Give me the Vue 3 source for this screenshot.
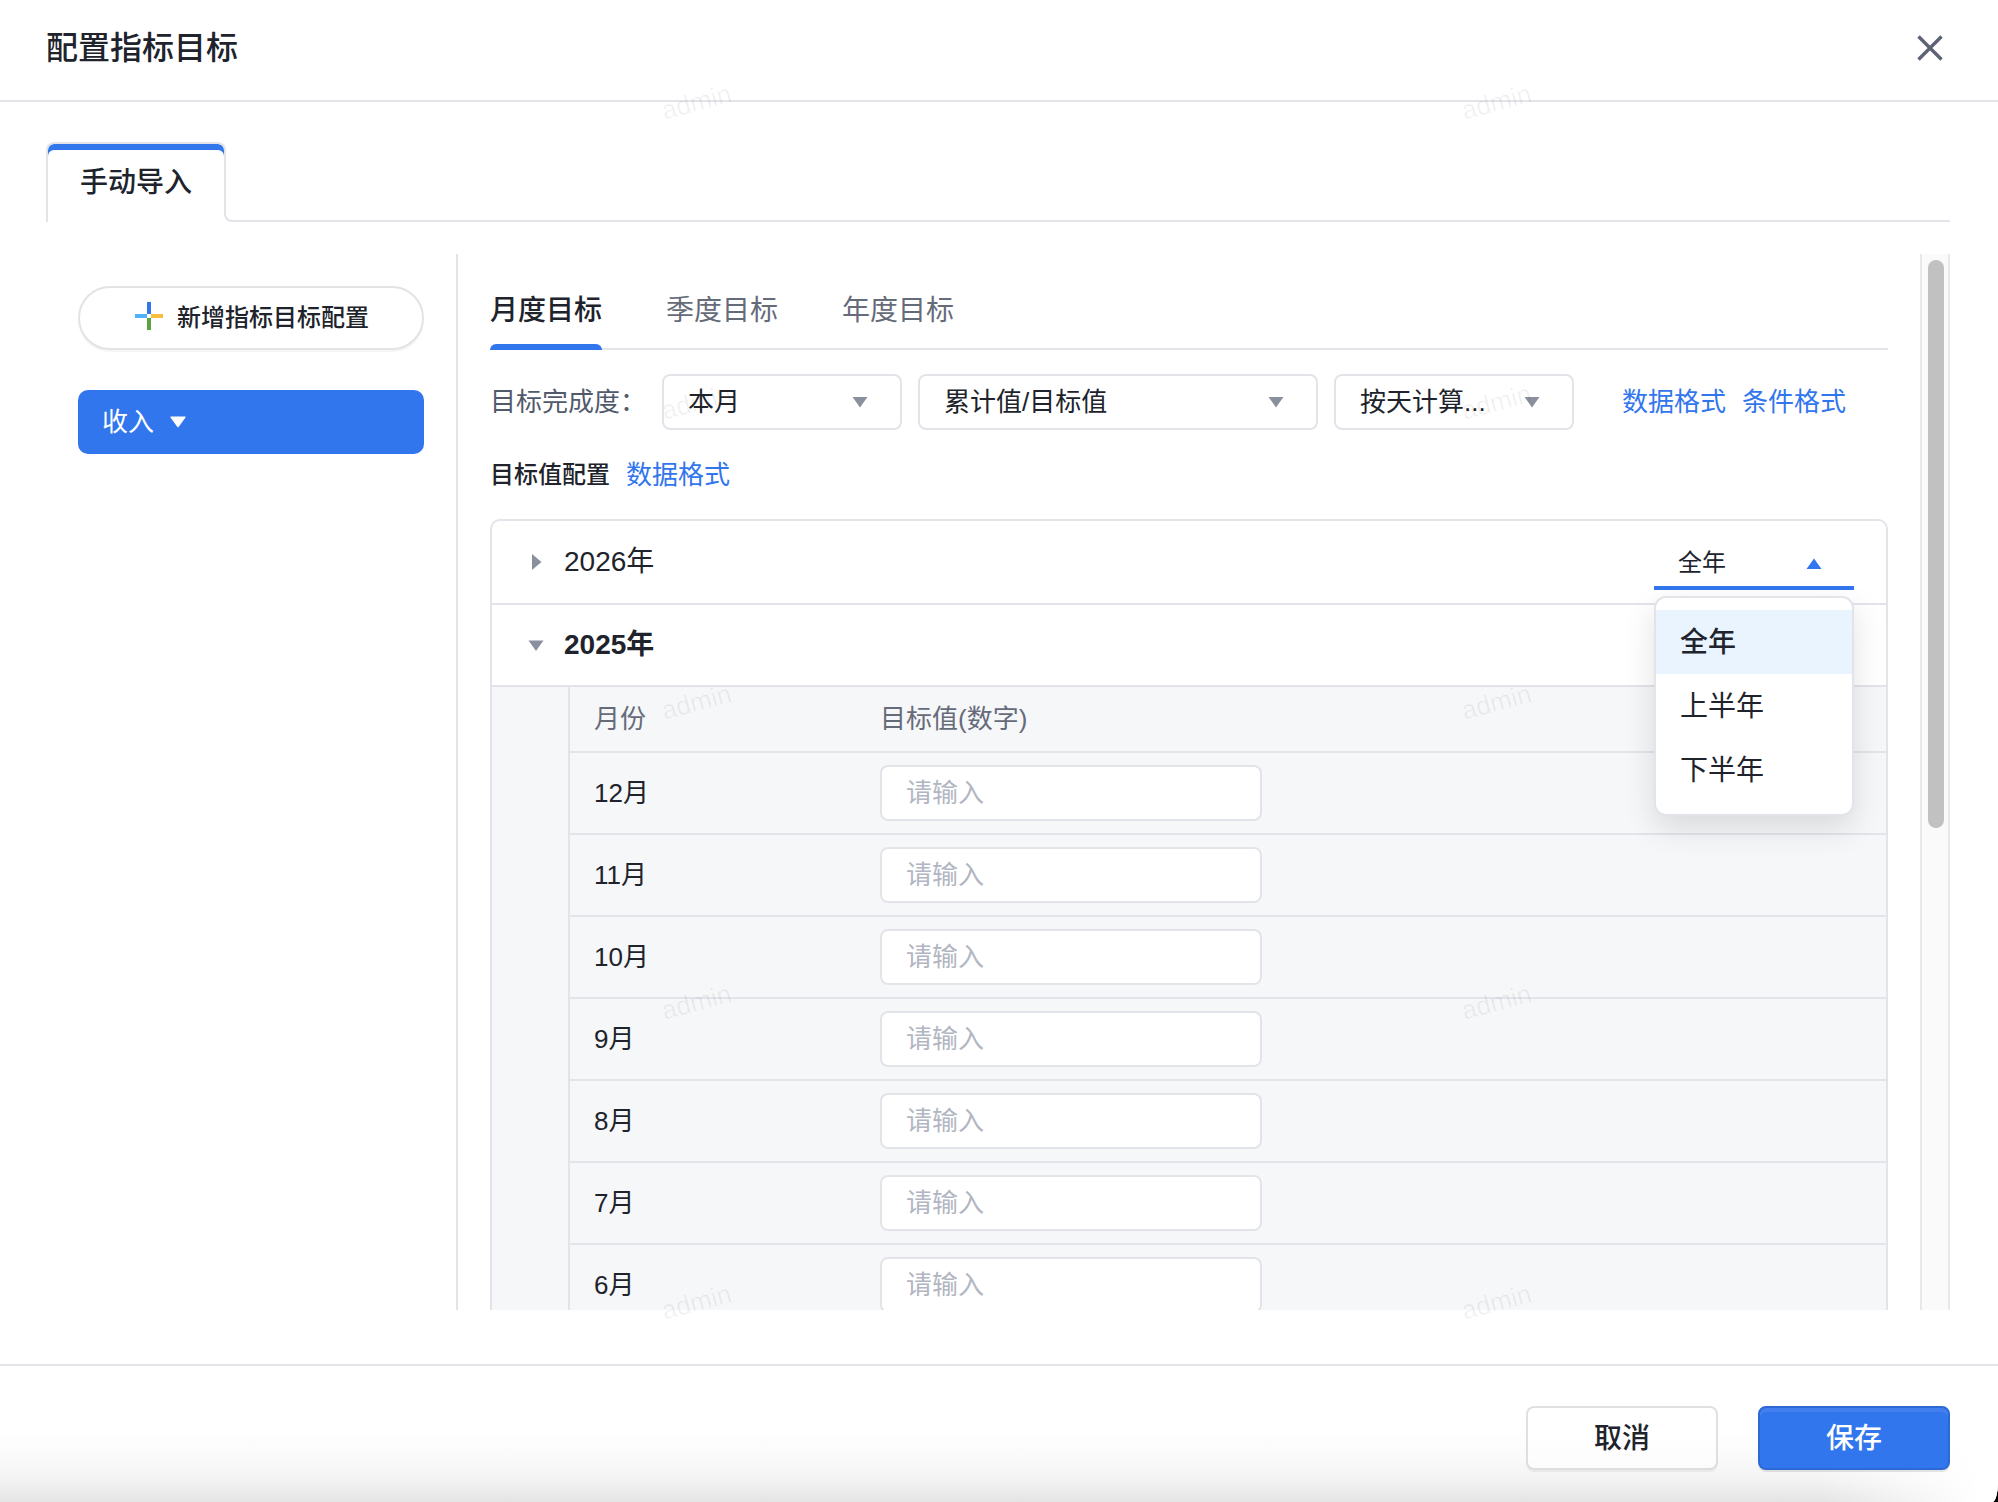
<script setup>
import { ref } from 'vue'

const goalTabs = ['月度目标', '季度目标', '年度目标']
const activeGoal = ref('月度目标')
const period = ref('本月')
const formula = ref('累计值/目标值')
const calc = ref('按天计算...')
const range = ref('全年')
const ranges = ['全年', '上半年', '下半年']
const menuOpen = ref(true)
const months = [12, 11, 10, 9, 8, 7, 6]
const values = ref({})

function pick(item) {
  range.value = item
  menuOpen.value = false
}
</script>

<template>
  <div class="window">
    <section class="dialog" role="dialog" aria-labelledby="dialog-title">
      <header class="header">
        <h1 id="dialog-title">配置指标目标</h1>
        <button class="close" type="button" aria-label="关闭">
          <svg viewBox="0 0 28 28" width="28" height="28">
            <path d="M2.5 2.5 25.5 25.5M25.5 2.5 2.5 25.5" fill="none" stroke="#5c6375" stroke-width="3.400" />
          </svg>
        </button>
      </header>

      <div class="body">
        <nav class="strip">
          <button class="strip-tab" type="button">手动导入</button>
          <span class="strip-line"></span>
        </nav>

        <div class="columns">
          <aside class="sidebar">
            <button class="add" type="button">
              <svg viewBox="0 0 28 32" width="28" height="32" aria-hidden="true">
                <path d="M12 0h4v12h-4z" fill="#3176ed" />
                <path d="M0 12h12v4H0z" fill="#4fb0fb" />
                <path d="M16 12h12v4H16z" fill="#f9bf3c" />
                <path d="M12 16h4v12h-4z" fill="#5ea142" />
              </svg>
              <span>新增指标目标配置</span>
            </button>
            <button class="metric" type="button">
              <span>收入</span>
              <svg viewBox="0 0 16 12" width="16" height="12" aria-hidden="true">
                <path d="M1 .5h14a.6.6 0 0 1 .5 1L8.600 11a.8.8 0 0 1-1.200 0L.5 1.500A.6.6 0 0 1 1 .5z" fill="#fff" />
              </svg>
            </button>
          </aside>

          <main class="pane">
            <div class="goal-tabs" role="tablist">
              <button
                v-for="tab in goalTabs"
                :key="tab"
                type="button"
                role="tab"
                class="goal-tab"
                :class="{ active: tab === activeGoal }"
                :aria-selected="tab === activeGoal"
                @click="activeGoal = tab"
              >{{ tab }}</button>
            </div>

            <div class="filters">
              <label class="filter-label" for="period">目标完成度：</label>
              <div class="select">
                <select id="period" v-model="period"><option>本月</option></select>
                <svg viewBox="0 0 16 12" width="16" height="12"><path d="M.5 1h15L8 11.500z" /></svg>
              </div>
              <div class="select wide">
                <select v-model="formula" aria-label="计算公式"><option>累计值/目标值</option></select>
                <svg viewBox="0 0 16 12" width="16" height="12"><path d="M.5 1h15L8 11.500z" /></svg>
              </div>
              <div class="select">
                <select v-model="calc" aria-label="计算方式"><option>按天计算...</option></select>
                <svg viewBox="0 0 16 12" width="16" height="12"><path d="M.5 1h15L8 11.500z" /></svg>
              </div>
              <div class="links">
                <a href="#">数据格式</a>
                <a href="#">条件格式</a>
              </div>
            </div>

            <div class="subtitle">
              <h2>目标值配置</h2>
              <a href="#">数据格式</a>
            </div>

            <div class="years">
              <div class="year">
                <button class="year-toggle" type="button" aria-expanded="false">
                  <svg viewBox="0 0 18 18" width="18" height="18"><path d="M4 1v16l9.500-8z" /></svg>
                  <span>2026年</span>
                </button>
                <div class="range">
                  <select v-model="range" aria-label="时间范围" @mousedown.prevent="menuOpen = !menuOpen">
                    <option v-for="item in ranges" :key="item">{{ item }}</option>
                  </select>
                  <svg viewBox="0 0 16 12" width="16" height="12"><path d="M.5 11h15L8 .5z" /></svg>
                  <ul v-if="menuOpen" class="menu" role="listbox">
                    <li
                      v-for="item in ranges"
                      :key="item"
                      role="option"
                      :class="{ chosen: item === range }"
                      :aria-selected="item === range"
                      @click="pick(item)"
                    >{{ item }}</li>
                  </ul>
                </div>
              </div>
              <div class="year open">
                <button class="year-toggle" type="button" aria-expanded="true">
                  <svg viewBox="0 0 18 18" width="18" height="18"><path d="M.5 4.500h15L8 15z" /></svg>
                  <span>2025年</span>
                </button>
              </div>
              <div class="detail">
                <table>
                  <thead>
                    <tr><th class="month">月份</th><th>目标值(数字)</th></tr>
                  </thead>
                  <tbody>
                    <tr v-for="m in months" :key="m">
                      <td><label :for="'m' + m">{{ m }}月</label></td>
                      <td><input :id="'m' + m" v-model="values[m]" type="text" placeholder="请输入" /></td>
                    </tr>
                  </tbody>
                </table>
              </div>
            </div>
          </main>

          <div class="track"><div class="thumb"></div></div>
        </div>
      </div>

      <footer class="footer">
        <button class="btn" type="button">取消</button>
        <button class="btn primary" type="button">保存</button>
      </footer>

      <div class="watermark" aria-hidden="true">
        <span v-for="n in 10" :key="n">admin</span>
      </div>
    </section>
  </div>
</template>

<style>
body {
  margin: 0;
}
</style>

<style scoped>
* {
  box-sizing: border-box;
}

.window {
  --line: #e3e4ea;
  --ink: #20232b;
  --blue: #3176ed;
  --grey: #8b909f;
  background: #000;
  font-family: "Liberation Sans", "Noto Sans CJK SC", sans-serif;
  font-size: 26px;
  line-height: 40px;
  color: var(--ink);
}

.dialog {
  position: relative;
  display: flex;
  flex-direction: column;
  height: 100vh;
  overflow: hidden;
  background: #fff;
  border-bottom-right-radius: 6px 20px;
}

button,
input,
select {
  margin: 0;
  padding: 0;
  border: 0;
  background: none;
  font: inherit;
  color: inherit;
  appearance: none;
  outline: none;
}

a {
  color: var(--blue);
  text-decoration: none;
}

.header {
  display: flex;
  flex: none;
  align-items: center;
  justify-content: space-between;
  height: 102px;
  padding: 0 54px 4px 46px;
  border-bottom: 2px solid var(--line);
}

h1 {
  margin: 0;
  font-size: 32px;
  font-weight: 500;
}

.close {
  display: flex;
}

.body {
  display: flex;
  flex: 1;
  flex-direction: column;
  min-height: 0;
  padding: 40px 48px 54px 46px;
}

.strip {
  display: flex;
  flex: none;
  align-items: flex-end;
}

.strip-tab {
  position: relative;
  height: 80px;
  padding: 2px 34px 0;
  font-size: 28px;
  font-weight: 500;
}

.strip-tab::before {
  content: "";
  position: absolute;
  inset: 0 0 12px 0;
  border: 2px solid var(--line);
  border-bottom: 0;
  border-radius: 8px 8px 0 0;
  box-shadow: inset 0 6px 0 var(--blue);
}

.strip-tab::after {
  content: "";
  position: absolute;
  left: 0;
  bottom: 0;
  width: 2px;
  height: 12px;
  background: var(--line);
}

.strip-line {
  flex: 1;
  height: 12px;
  margin-left: -2px;
  border: solid var(--line);
  border-width: 0 0 2px 2px;
  border-bottom-left-radius: 8px;
}

.columns {
  display: flex;
  flex: 1;
  min-height: 0;
  margin-top: 32px;
}

.sidebar {
  display: flex;
  flex: none;
  flex-direction: column;
  gap: 40px;
  width: 412px;
  padding: 32px;
  border-right: 2px solid var(--line);
}

.add {
  display: flex;
  align-items: center;
  justify-content: center;
  gap: 14px;
  height: 64px;
  padding-left: 2px;
  border: 2px solid #e3e3e3;
  border-radius: 32px;
  box-shadow: 0 2px 0 #f5f5f5;
  font-size: 24px;
  font-weight: 500;
}

.metric {
  display: flex;
  align-items: center;
  gap: 16px;
  height: 64px;
  padding: 0 24px;
  border-radius: 10px;
  background: var(--blue);
  color: #fff;
}

.pane {
  flex: 1;
  min-width: 0;
  padding: 32px 32px 0;
  overflow: hidden;
}

.goal-tabs {
  display: flex;
  gap: 64px;
  border-bottom: 2px solid var(--line);
}

.goal-tab {
  height: 64px;
  margin-bottom: -2px;
  padding-bottom: 14px;
  font-size: 28px;
  color: #666b7a;
  position: relative;
}

.goal-tab.active {
  font-weight: 500;
  color: var(--ink);
}

.goal-tab.active::after {
  content: "";
  position: absolute;
  inset: auto 0 0 0;
  height: 6px;
  border-radius: 6px 6px 0 0;
  background: var(--blue);
}

.filters {
  display: flex;
  align-items: center;
  gap: 16px;
  margin-top: 24px;
}

.filter-label {
  width: 156px;
  color: #505a6b;
}

.select {
  position: relative;
  width: 240px;
}

.select.wide {
  width: 400px;
}

.select select {
  display: block;
  width: 100%;
  height: 56px;
  padding: 0 24px;
  border: 2px solid var(--line);
  border-radius: 8px;
  background: #fff;
}

.select svg {
  position: absolute;
  top: 22px;
  right: 34px;
  fill: var(--grey);
  pointer-events: none;
}

.links {
  display: flex;
  gap: 16px;
  margin-left: 32px;
}

.subtitle {
  display: flex;
  align-items: center;
  gap: 16px;
  margin-top: 25px;
}

h2 {
  margin: 0;
  font-size: 24px;
  font-weight: 500;
}

.years {
  margin-top: 24px;
  border: 2px solid var(--line);
  border-radius: 10px;
}

.year {
  display: flex;
  align-items: center;
  justify-content: space-between;
  height: 84px;
  padding: 0 32px 0 36px;
  border-bottom: 2px solid var(--line);
  font-size: 28px;
}

.year.open {
  height: 82px;
  font-weight: 600;
}

.year-toggle {
  display: flex;
  align-items: center;
  gap: 18px;
}

.year-toggle svg {
  fill: var(--grey);
}

.range {
  position: relative;
  width: 200px;
  align-self: flex-end;
  margin-bottom: 13px;
}

.range select {
  display: block;
  width: 100%;
  height: 52px;
  padding: 2px 24px 0;
  border-bottom: 4px solid var(--blue);
  font-size: 24px;
}

.range svg {
  position: absolute;
  top: 20px;
  right: 32px;
  fill: var(--blue);
  pointer-events: none;
}

.menu {
  position: absolute;
  z-index: 2;
  top: 58px;
  left: 0;
  right: 0;
  margin: 0;
  padding: 12px 0;
  list-style: none;
  border: 2px solid var(--line);
  border-radius: 12px;
  background: #fff;
  box-shadow: 0 12px 32px rgba(0, 0, 0, 0.12);
}

.menu li {
  height: 64px;
  padding: 0 24px;
  line-height: 66px;
}

.menu li.chosen {
  background: #e9f4fe;
  font-weight: 500;
}

.detail {
  padding-left: 76px;
  background: #f6f7f9;
}

table {
  width: 100%;
  border-spacing: 0;
  border-left: 2px solid var(--line);
}

th,
td {
  height: 82px;
  padding: 0 24px;
  border-bottom: 2px solid var(--line);
  text-align: left;
}

th {
  height: 66px;
  font-weight: 400;
  color: #666b7a;
}

.month {
  width: 286px;
}

td input {
  display: block;
  width: 382px;
  height: 56px;
  padding: 0 24px;
  border: 2px solid var(--line);
  border-radius: 8px;
  background: #fff;
}

td input::placeholder {
  color: #b2b6c2;
  opacity: 1;
}

.track {
  flex: none;
  width: 30px;
  padding: 6px;
  border: solid #e8e8e8;
  border-width: 0 2px;
  background: #fafafa;
}

.thumb {
  width: 16px;
  height: calc(54% + 4px);
  border-radius: 8px;
  background: #c1c1c1;
}

.footer {
  display: flex;
  flex: none;
  justify-content: flex-end;
  gap: 40px;
  height: 138px;
  padding: 40px 48px 0;
  border-top: 2px solid var(--line);
  background:
    linear-gradient(to right, transparent calc(100% - 180px), #fff calc(100% - 20px)),
    linear-gradient(#fff 45%, #fbfbfb 65%, #f3f3f3 84%, #e4e4e4);
}

.btn {
  width: 192px;
  height: 64px;
  padding-top: 2px;
  border: 2px solid rgba(0, 0, 0, 0.12);
  border-radius: 8px;
  background: rgba(255, 255, 255, 0.6);
  box-shadow: 0 2px 0 rgba(0, 0, 0, 0.05);
  font-size: 28px;
  font-weight: 500;
}

.btn.primary {
  border-color: #2c69d4;
  background: var(--blue);
  box-shadow: inset 0 4px 0 #4380ee, 0 2px 0 rgba(0, 0, 0, 0.1);
  color: #fff;
}

.watermark {
  position: absolute;
  z-index: 3;
  inset: -48px 0 0 0;
  display: grid;
  grid-template-columns: 800px 800px;
  grid-auto-rows: 300px;
  place-items: center;
  justify-content: start;
  padding-left: 296px;
  overflow: hidden;
  pointer-events: none;
  color: rgba(0, 0, 0, 0.06);
  font-size: 26px;
}

.watermark span {
  transform: rotate(-15deg);
}
</style>
